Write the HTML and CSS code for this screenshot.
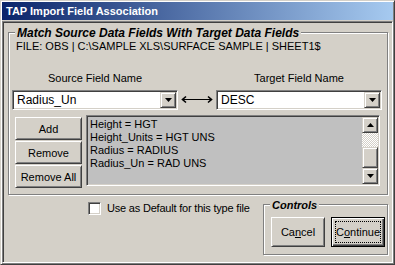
FILE: index.html
```html
<!DOCTYPE html>
<html lang="en">

<head>
  <meta charset="UTF-8">
  <title>TAP Import Field Association</title>
  <link rel="stylesheet" href="styles.css">
</head>

<body>
  <div class="window">
    <div class="titlebar">TAP Import Field Association</div>
    <div class="client">

      <div class="group group-main">
        <span class="legend legend-main">Match Source Data Fields With Target Data Fields</span>
        <div class="file-path">FILE: OBS | C:\SAMPLE XLS\SURFACE SAMPLE | SHEET1$</div>

        <div class="field-row">
          <div class="field">
            <div class="field-label">Source Field Name</div>
            <div class="combo">
              <span class="combo-text">Radius_Un</span>
              <span class="drop-btn">
                <svg width="7" height="4" viewBox="0 0 7 4"><path d="M0 0h7L3.5 4z" fill="#000"/></svg>
              </span>
            </div>
          </div>

          <svg class="link-arrow" width="32" height="9" viewBox="0 0 32 9">
            <path d="M2 4.5h28" stroke="#000" stroke-width="1"/>
            <path d="M5 1.5L1.5 4.5L5 7.5M27 1.5L30.5 4.5L27 7.5" stroke="#000" stroke-width="1.6" fill="none"/>
          </svg>

          <div class="field">
            <div class="field-label">Target Field Name</div>
            <div class="combo">
              <span class="combo-text">DESC</span>
              <span class="drop-btn">
                <svg width="7" height="4" viewBox="0 0 7 4"><path d="M0 0h7L3.5 4z" fill="#000"/></svg>
              </span>
            </div>
          </div>
        </div>

        <div class="map-row">
          <div class="btn-col">
            <button class="btn btn-side">Add</button>
            <button class="btn btn-side">Remove</button>
            <button class="btn btn-side">Remove All</button>
          </div>

          <div class="listbox">
            <ul class="list-items">
              <li>Height = HGT</li>
              <li>Height_Units = HGT UNS</li>
              <li>Radius = RADIUS</li>
              <li>Radius_Un = RAD UNS</li>
            </ul>
            <div class="scrollbar">
              <div class="sb-btn">
                <svg width="7" height="4" viewBox="0 0 7 4"><path d="M0 4h7L3.5 0z" fill="#000"/></svg>
              </div>
              <div class="sb-track"></div>
              <div class="sb-thumb"></div>
              <div class="sb-btn">
                <svg width="7" height="4" viewBox="0 0 7 4"><path d="M0 0h7L3.5 4z" fill="#000"/></svg>
              </div>
            </div>
          </div>
        </div>
      </div>

      <div class="bottom-row">
        <label class="check-row">
          <span class="checkbox"></span>
          Use as Default for this type file
        </label>

        <div class="group group-controls">
          <span class="legend">Controls</span>
          <button class="btn btn-action">Ca<u>n</u>cel</button>
          <button class="btn btn-action btn-default"><span class="focus-rect">C<u>o</u>ntinue</span></button>
        </div>
      </div>

    </div>
  </div>
</body>

</html>
```

FILE: styles.css
```css
* {
  margin: 0;
  padding: 0;
  box-sizing: border-box;
}

body {
  font-family: "Liberation Sans", Arial, sans-serif;
  font-size: 11px;
  color: #000;
  background: #d4d0c8;
}

.window {
  width: 395px;
  height: 265px;
  display: flex;
  flex-direction: column;
  background: #d4d0c8;
  border: 1px solid;
  border-color: #d4d0c8 #404040 #404040 #d4d0c8;
  box-shadow: inset 1px 1px #fff, inset -1px -1px #808080;
  padding: 1px;
}

.titlebar {
  height: 18px;
  flex: none;
  padding-left: 4px;
  line-height: 18px;
  font-weight: bold;
  color: #fff;
  background: linear-gradient(90deg, #0a246a, #a6caf0);
}

.client {
  flex: 1;
  margin-top: 1px;
  display: flex;
  flex-direction: column;
  padding: 10px 0 0 5px;
  border: 1px solid;
  border-color: #808080 #fff #fff #808080;
  box-shadow: inset 1px 1px #404040, inset -1px -1px #d4d0c8;
}

/* etched group box */
.group {
  position: relative;
  border: 1px solid #808080;
  box-shadow: 1px 1px #fff, inset 1px 1px #fff;
}

.legend {
  position: absolute;
  top: -7px;
  left: 6px;
  padding: 0 2px;
  line-height: 14px;
  background: #d4d0c8;
  font-weight: bold;
  font-style: italic;
}

.legend-main {
  font-size: 12px;
}

.group-main {
  width: 380px;
  height: 163px;
  padding: 7px 5px 0 3px;
}

.file-path {
  padding-left: 4px;
  line-height: 13px;
}

.field-row {
  display: flex;
  align-items: flex-end;
  margin-top: 19px;
}

.field {
  width: 166px;
}

.field-label {
  text-align: center;
  line-height: 13px;
  margin-bottom: 5px;
}

.link-arrow {
  margin: 0 3px 6px 3px;
}

/* sunken combo box */
.combo {
  height: 20px;
  display: flex;
  align-items: center;
  background: #fff;
  border: 1px solid;
  border-color: #808080 #fff #fff #808080;
  box-shadow: inset 1px 1px #404040, inset -1px -1px #d4d0c8;
  padding: 1px;
}

.combo-text {
  flex: 1;
  padding-left: 3px;
  font-size: 12px;
}

.drop-btn {
  width: 16px;
  height: 16px;
  display: flex;
  align-items: center;
  justify-content: center;
  background: #d4d0c8;
  border: 1px solid;
  border-color: #d4d0c8 #404040 #404040 #d4d0c8;
  box-shadow: inset 1px 1px #fff, inset -1px -1px #808080;
}

.map-row {
  display: flex;
  align-items: flex-start;
  margin-top: 5px;
}

.btn-col {
  display: flex;
  flex-direction: column;
  gap: 1px;
  margin: 2px 4px 0 3px;
}

/* raised push button */
.btn {
  font-family: inherit;
  font-size: 11px;
  color: #000;
  background: #d4d0c8;
  border: 1px solid;
  border-color: #fff #404040 #404040 #fff;
  box-shadow: inset 1px 1px #d4d0c8, inset -1px -1px #808080;
}

.btn-side {
  width: 67px;
  height: 23px;
}

.listbox {
  width: 294px;
  height: 71px;
  display: flex;
  background: #c0c0c0;
  border: 1px solid;
  border-color: #808080 #fff #fff #808080;
  box-shadow: inset 1px 1px #404040, inset -1px -1px #d4d0c8;
  padding: 1px;
}

.list-items {
  flex: 1;
  list-style: none;
  padding: 1px 0 0 2px;
  line-height: 13px;
}

.scrollbar {
  width: 16px;
  display: flex;
  flex-direction: column;
}

.sb-btn {
  height: 16px;
  display: flex;
  align-items: center;
  justify-content: center;
  background: #d4d0c8;
  border: 1px solid;
  border-color: #d4d0c8 #404040 #404040 #d4d0c8;
  box-shadow: inset 1px 1px #fff, inset -1px -1px #808080;
}

.sb-track {
  height: 14px;
  background: repeating-conic-gradient(#fff 0 25%, #d4d0c8 0 50%) 0 0 / 2px 2px;
}

.sb-thumb {
  height: 21px;
  background: #d4d0c8;
  border: 1px solid;
  border-color: #d4d0c8 #404040 #404040 #d4d0c8;
  box-shadow: inset 1px 1px #fff, inset -1px -1px #808080;
}

.bottom-row {
  display: flex;
  align-items: flex-start;
  margin-top: 1px;
}

.check-row {
  display: flex;
  align-items: center;
  gap: 6px;
  margin: 6px 0 0 80px;
  width: 175px;
  line-height: 13px;
  letter-spacing: -0.2px;
}

.checkbox {
  width: 13px;
  height: 13px;
  flex: none;
  background: #fff;
  border: 1px solid;
  border-color: #808080 #fff #fff #808080;
  box-shadow: inset 1px 1px #404040, inset -1px -1px #d4d0c8;
}

.group-controls {
  width: 125px;
  height: 51px;
  margin-top: 8px;
  display: flex;
  gap: 6px;
  padding: 12px 0 0 7px;
}

.btn-action {
  width: 54px;
  height: 30px;
}

.btn-default {
  border: 1px solid #000;
  box-shadow: inset 1px 1px #fff, inset -1px -1px #404040, inset -2px -2px #808080;
  padding: 3px;
}

.focus-rect {
  display: flex;
  align-items: center;
  justify-content: center;
  height: 100%;
  border: 1px dotted #000;
}
```
